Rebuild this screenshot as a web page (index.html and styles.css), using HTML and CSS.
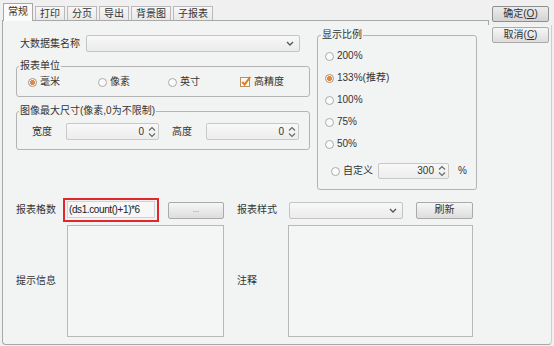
FILE: index.html
```html
<!DOCTYPE html>
<html lang="zh-CN">
<head>
  <meta charset="UTF-8" />
  <title>报表属性</title>
  <link rel="stylesheet" href="styles.css">
</head>
<body>

<div class="dialog">

  <div class="tabs">
    <div class="tab active">常规</div>
    <div class="tab">打印</div>
    <div class="tab">分页</div>
    <div class="tab">导出</div>
    <div class="tab">背景图</div>
    <div class="tab">子报表</div>
  </div>

  <div class="panel">

    <div class="top">
      <div class="left-col">
        <div class="ds-row">
          <span class="ds-label">大数据集名称</span>
          <div class="select ds-select">
            <svg class="chev" width="8" height="5" viewBox="0 0 8 5"><path d="M1 1 L4 4 L7 1" fill="none" stroke="#555" stroke-width="1.3"/></svg>
          </div>
        </div>

        <fieldset class="group unit-group">
          <legend>报表单位</legend>
          <div class="unit-row">
            <label class="radio checked"><span class="dot"></span>毫米</label>
            <label class="radio"><span class="dot"></span>像素</label>
            <label class="radio"><span class="dot"></span>英寸</label>
            <label class="check">
              <svg width="12" height="12" viewBox="0 0 12 12">
                <rect x="0.5" y="1.5" width="9" height="9" fill="#fdfaf5" stroke="#b8925e"/>
                <path d="M2.3 5.8 L4.6 8.6 L10.2 1" fill="none" stroke="#e37b1e" stroke-width="2"/>
              </svg>高精度
            </label>
          </div>
        </fieldset>

        <fieldset class="group size-group">
          <legend>图像最大尺寸(像素,0为不限制)</legend>
          <div class="size-row">
            <span class="size-label">宽度</span>
            <div class="spin size-spin">
              <span class="val">0</span>
              <svg class="arrows" width="8" height="12" viewBox="0 0 8 12"><path d="M1 4.5 L4 1.5 L7 4.5 M1 7.5 L4 10.5 L7 7.5" fill="none" stroke="#666" stroke-width="1.1"/></svg>
            </div>
            <span class="size-label gap-left">高度</span>
            <div class="spin size-spin">
              <span class="val">0</span>
              <svg class="arrows" width="8" height="12" viewBox="0 0 8 12"><path d="M1 4.5 L4 1.5 L7 4.5 M1 7.5 L4 10.5 L7 7.5" fill="none" stroke="#666" stroke-width="1.1"/></svg>
            </div>
          </div>
        </fieldset>
      </div>

      <fieldset class="group scale-group">
        <legend>显示比例</legend>
        <label class="radio"><span class="dot"></span>200%</label>
        <label class="radio checked"><span class="dot"></span>133%(推荐)</label>
        <label class="radio"><span class="dot"></span>100%</label>
        <label class="radio"><span class="dot"></span>75%</label>
        <label class="radio"><span class="dot"></span>50%</label>
        <div class="custom-row">
          <label class="radio custom-radio"><span class="dot"></span>自定义</label>
          <div class="spin custom-spin">
            <span class="val">300</span>
            <svg class="arrows" width="8" height="12" viewBox="0 0 8 12"><path d="M1 4.5 L4 1.5 L7 4.5 M1 7.5 L4 10.5 L7 7.5" fill="none" stroke="#666" stroke-width="1.1"/></svg>
          </div>
          <span class="percent">%</span>
        </div>
      </fieldset>
    </div>

    <div class="bottom">
      <div class="bottom-row">
        <span class="lbl lbl-count">报表格数</span>
        <div class="formula-box">
          <div class="formula">(ds1.count()+1)*6</div>
        </div>
        <div class="btn btn-dots">...</div>
        <span class="lbl lbl-style">报表样式</span>
        <div class="select style-select">
          <svg class="chev" width="8" height="5" viewBox="0 0 8 5"><path d="M1 1 L4 4 L7 1" fill="none" stroke="#555" stroke-width="1.3"/></svg>
        </div>
        <div class="btn btn-refresh">刷新</div>
      </div>

      <div class="text-row">
        <span class="lbl lbl-tip">提示信息</span>
        <div class="textarea tip-area"></div>
        <span class="lbl lbl-note">注释</span>
        <div class="textarea note-area"></div>
      </div>
    </div>

  </div>

  <div class="side">
    <div class="btn btn-default">确定(<u>O</u>)</div>
    <div class="btn">取消(<u>C</u>)</div>
  </div>

</div>

</body>
</html>
```

FILE: styles.css
```css
* {
  box-sizing: border-box;
}
body {
  margin: 0;
  background: #f0f0f0;
  font-family: "Liberation Sans", "Noto Sans CJK SC", sans-serif;
  font-size: 10px;
  line-height: 14px;
  color: #333;
}
.dialog {
  position: relative;
  width: 554px;
  height: 346px;
  padding-top: 3px;
  overflow: hidden;
}

/* Reiter */
.tabs {
  display: flex;
  align-items: flex-end;
  gap: 2px;
  height: 18px;
  margin-left: 3px;
}
.tab {
  height: 15px;
  padding: 0 4px;
  border: 1px solid #b9b9b9;
  border-bottom: none;
  background: linear-gradient(#f7f7f7, #e7e7e7);
  line-height: 14px;
}
.tab.active {
  position: relative;
  z-index: 1;
  height: 18px;
  background: #fbfbfb;
  border-color: #a8a8a8;
  line-height: 16px;
}

/* Hauptbereich */
.panel {
  position: relative;
  width: 550px;
  height: 325px;
  margin: -1px 0 0 2px;
  padding: 7px 0 0 13px;
  border: 1px solid #a8a8a8;
  border-right-color: #cfcfcf;
  border-radius: 0 0 4px 4px;
  background: #f2f3f3;
}
.top {
  display: flex;
  gap: 7px;
}
.left-col {
  width: 294px;
  padding-top: 7px;
}
.ds-row {
  display: flex;
  align-items: center;
  height: 17px;
}
.ds-label {
  width: 70px;
  padding-left: 4px;
}
.select {
  display: flex;
  align-items: center;
  justify-content: flex-end;
  height: 17px;
  padding-right: 5px;
  border: 1px solid #c4c4c4;
  border-radius: 2px;
  background: linear-gradient(#f8f8f8, #ebebeb);
}
.ds-select {
  width: 214px;
}

/* Gruppen */
fieldset.group {
  min-width: 0;
  margin: 7px 0 0;
  border: 1px solid #b4b4b4;
  border-radius: 3px;
}
legend {
  padding: 0 1px;
  line-height: 14px;
}
.unit-group {
  padding: 2px 8px 7px 11px;
}
.unit-group legend {
  margin-left: -9px;
}
.unit-row {
  display: grid;
  grid-template-columns: 70px 70px 72px auto;
  height: 14px;
}
.radio {
  display: flex;
  align-items: center;
  gap: 3px;
}
.radio .dot {
  width: 9px;
  height: 9px;
  border: 1px solid #ababab;
  border-radius: 50%;
  background: #fbfbfb;
}
.radio.checked .dot {
  border-color: #a09286;
  background: radial-gradient(circle, #e5893c 0 2.3px, #fbfbfb 2.8px);
}
.check {
  display: flex;
  align-items: center;
  gap: 2px;
}

.size-group {
  padding: 5px 8px 9px 15px;
}
.size-group legend {
  margin-left: -13px;
}
.size-row {
  display: flex;
  align-items: center;
  height: 17px;
}
.size-label {
  width: 34px;
}
.size-label.gap-left {
  margin-left: 13px;
}
.spin {
  display: flex;
  align-items: center;
  justify-content: flex-end;
  padding-right: 2px;
  border: 1px solid #c8c8c8;
  border-radius: 2px;
  background: linear-gradient(#f8f8f8, #ededed);
}
.spin .val {
  margin-right: 4px;
}
.size-spin {
  width: 93px;
  height: 17px;
}

fieldset.scale-group {
  width: 160px;
  margin-top: 0;
  padding: 3px 6px 10px 7px;
}
.scale-group legend {
  margin-left: -4px;
}
.scale-group > .radio {
  height: 22px;
}
.custom-row {
  display: flex;
  align-items: center;
  height: 16px;
  margin: 8px 0 0 6px;
}
.custom-radio {
  width: 47px;
}
.custom-spin {
  width: 71px;
  height: 16px;
}
.percent {
  margin-left: 9px;
}

/* Unterer Bereich */
.bottom {
  margin-top: 8px;
}
.bottom-row {
  display: flex;
  align-items: center;
  height: 24px;
}
.lbl-count {
  width: 47px;
}
.formula-box {
  width: 96px;
  height: 24px;
  padding: 1px 2px 2px;
  border: 2px solid #e2262d;
}
.formula {
  height: 17px;
  padding-left: 1px;
  border: 1px solid #d2d2d2;
  background: #f7f7f7;
  color: #222;
  line-height: 15px;
  letter-spacing: -0.4px;
  white-space: nowrap;
}
.btn {
  display: flex;
  align-items: center;
  justify-content: center;
  height: 17px;
  border: 1px solid #aaaaaa;
  border-radius: 2px;
  background: linear-gradient(#f6f6f6, #dddddd);
  color: #333;
}
.btn u {
  text-decoration-thickness: 1px;
}
.btn-dots {
  width: 56px;
  margin-left: 9px;
  color: #777;
  font-size: 8px;
}
.lbl-style {
  width: 52px;
  margin-left: 13px;
}
.style-select {
  width: 114px;
}
.btn-refresh {
  width: 57px;
  margin-left: 13px;
}
.text-row {
  display: flex;
  align-items: center;
  height: 112px;
  margin-top: 3px;
}
.lbl-tip {
  width: 51px;
}
.lbl-note {
  width: 51px;
  margin-left: 13px;
}
.textarea {
  height: 112px;
  border: 1px solid #b9b9b9;
  background: #f4f5f5;
}
.tip-area {
  width: 157px;
}
.note-area {
  width: 185px;
}

/* Schaltflächen rechts, liegen über der Reiterkante */
.side {
  position: absolute;
  top: 0;
  right: 0;
  z-index: 2;
  display: flex;
  flex-direction: column;
  gap: 5px;
  width: 66px;
  height: 25px;
  padding: 6px 5px 0 4px;
  background: #f0f0f0;
}
.side::before {
  content: "";
  position: absolute;
  left: 0;
  bottom: 0;
  width: 1px;
  height: 5px;
  background: #a8a8a8;
}
.side .btn {
  flex: 0 0 16px;
  height: 16px;
}
.btn-default {
  border-color: #8f8f8f;
  background: linear-gradient(#ececec, #d3d3d3);
}
```
